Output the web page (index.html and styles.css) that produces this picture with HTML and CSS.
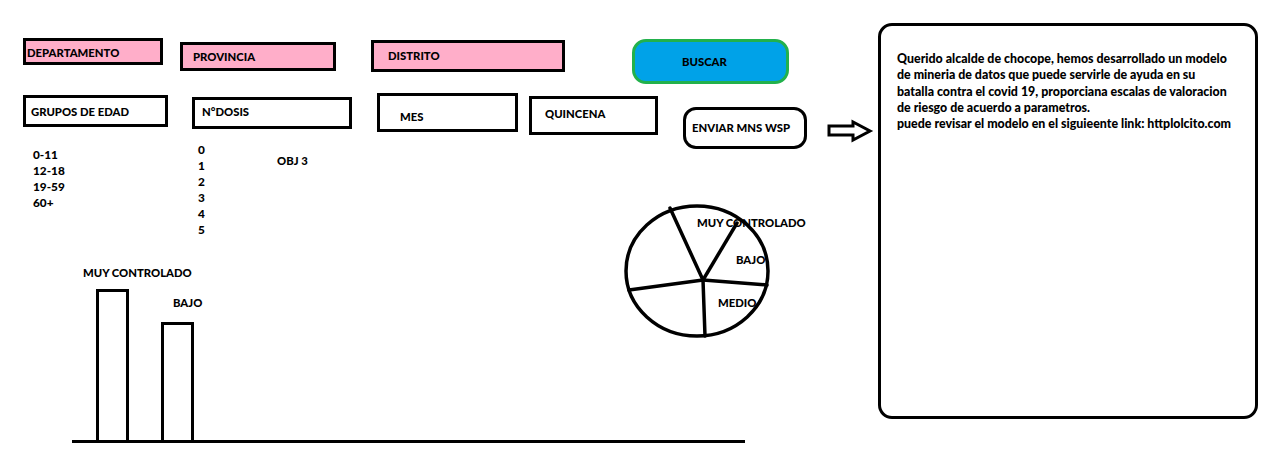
FILE: index.html
```html
<!DOCTYPE html>
<html lang="es">
<head>
<meta charset="utf-8">
<title>Boceto</title>
<link rel="stylesheet" href="styles.css">
</head>
<body>
<div class="canvas">
  <div class="box pink dep"><span>DEPARTAMENTO</span></div>
  <div class="box pink prov"><span>PROVINCIA</span></div>
  <div class="box pink dist"><span>DISTRITO</span></div>
  <div class="btn-buscar"><span>BUSCAR</span></div>

  <div class="box grupos"><span>GRUPOS DE EDAD</span></div>
  <div class="box dosis"><span>N°DOSIS</span></div>
  <div class="box mes"><span>MES</span></div>
  <div class="box quincena"><span>QUINCENA</span></div>
  <div class="btn-enviar"><span>ENVIAR MNS WSP</span></div>

  <svg class="arrow" viewBox="820 110 60 40" width="60" height="40">
    <polygon points="829,126 853,126 853,122 870,131 853,140 853,135 829,135" fill="#fff" stroke="#000" stroke-width="3" stroke-linejoin="miter"/>
  </svg>

  <div class="message">
    <p>Querido alcalde de chocope, hemos desarrollado un modelo<br>de mineria de datos que puede servirle de ayuda en su<br>batalla contra el covid 19, proporciana escalas de valoracion<br>de riesgo de acuerdo a parametros.</p>
    <p>puede revisar el modelo en el siguieente link: httplolcito.com</p>
  </div>

  <ul class="list edades">
    <li>0-11</li>
    <li>12-18</li>
    <li>19-59</li>
    <li>60+</li>
  </ul>

  <ul class="list dosis-list">
    <li>0</li>
    <li>1</li>
    <li>2</li>
    <li>3</li>
    <li>4</li>
    <li>5</li>
  </ul>

  <span class="label obj">OBJ 3</span>

  <svg class="pie" viewBox="600 190 200 160" width="200" height="160">
    <ellipse cx="697" cy="271" rx="71" ry="65" fill="#fff" stroke="#000" stroke-width="3.5"/>
    <g stroke="#000" stroke-width="3.5" stroke-linecap="round">
      <line x1="703" y1="280" x2="670" y2="208"/>
      <line x1="703" y1="280" x2="737" y2="223"/>
      <line x1="703" y1="280" x2="767" y2="285"/>
      <line x1="703" y1="280" x2="705" y2="336"/>
      <line x1="703" y1="280" x2="629" y2="290"/>
    </g>
  </svg>
  <span class="label pie-muy">MUY CONTROLADO</span>
  <span class="label pie-bajo">BAJO</span>
  <span class="label pie-medio">MEDIO</span>

  <span class="label bar-muy">MUY CONTROLADO</span>
  <span class="label bar-bajo">BAJO</span>
  <div class="bar bar1"></div>
  <div class="bar bar2"></div>
  <div class="axis"></div>
</div>
</body>
</html>
```

FILE: styles.css
```css
* { box-sizing: border-box; }

html, body {
  margin: 0;
  padding: 0;
  background: #fff;
}

body {
  font-family: Lato, "Open Sans", "Noto Sans", sans-serif;
  font-weight: 900;
  font-size: 11.3px;
  color: #000;
}

.canvas {
  position: relative;
  width: 1280px;
  height: 467px;
  overflow: hidden;
}

.box {
  position: absolute;
  border: 3px solid #000;
  background: #fff;
  display: flex;
  align-items: center;
  line-height: 1;
}

.pink { background: #ffaec9; }

.dep { left: 23px; top: 38px; width: 140px; height: 27px; padding: 2px 0 0 1px; }
.prov { left: 180px; top: 42px; width: 156px; height: 29px; padding: 0 0 0 10px; }
.dist { left: 371px; top: 40px; width: 194px; height: 32px; padding: 0 0 0 14px; }

.grupos { left: 23px; top: 95px; width: 145px; height: 32px; padding: 1px 0 0 5px; }
.dosis { left: 192px; top: 97px; width: 160px; height: 32px; padding: 0 0 2px 7px; }
.mes { left: 377px; top: 93px; width: 141px; height: 39px; padding: 9px 0 0 20px; }
.quincena { left: 529px; top: 96px; width: 129px; height: 39px; padding: 0 0 4px 13px; }

.btn-buscar {
  position: absolute;
  left: 632px;
  top: 39px;
  width: 157px;
  height: 45px;
  border: 3px solid #22b14c;
  border-radius: 14px;
  background: #00a2e8;
  display: flex;
  align-items: center;
  padding: 0 0 0 47px;
  line-height: 1;
}

.btn-enviar {
  position: absolute;
  left: 683px;
  top: 107px;
  width: 124px;
  height: 42px;
  border: 3px solid #000;
  border-radius: 13px;
  background: #fff;
  display: flex;
  align-items: center;
  padding: 0 0 1px 6px;
  line-height: 1;
}

.arrow {
  position: absolute;
  left: 820px;
  top: 110px;
}

.message {
  position: absolute;
  left: 878px;
  top: 23px;
  width: 380px;
  height: 396px;
  border: 3px solid #000;
  border-radius: 14px;
  background: #fff;
  padding: 25px 10px 0 16px;
  font-size: 12.4px;
  line-height: 16.3px;
  white-space: nowrap;
}

.message p { margin: 0; }

.list {
  position: absolute;
  margin: 0;
  padding: 0;
  list-style: none;
  line-height: 16px;
  font-size: 11.8px;
}

.edades { left: 33px; top: 147px; }
.dosis-list { left: 198px; top: 142px; }

.label {
  position: absolute;
  line-height: 1;
  white-space: nowrap;
}

.obj { left: 277px; top: 155px; }

.pie {
  position: absolute;
  left: 600px;
  top: 190px;
}

.pie-muy { left: 697px; top: 217px; }
.pie-bajo { left: 736px; top: 254px; }
.pie-medio { left: 718px; top: 297px; }

.bar-muy { left: 83px; top: 267px; }
.bar-bajo { left: 173px; top: 297px; }

.bar {
  position: absolute;
  border: 3px solid #000;
  background: #fff;
}

.bar1 { left: 96px; top: 289px; width: 33px; height: 154px; }
.bar2 { left: 161px; top: 322px; width: 33px; height: 121px; }

.axis {
  position: absolute;
  left: 72px;
  top: 440px;
  width: 673px;
  height: 3px;
  background: #000;
}
```
